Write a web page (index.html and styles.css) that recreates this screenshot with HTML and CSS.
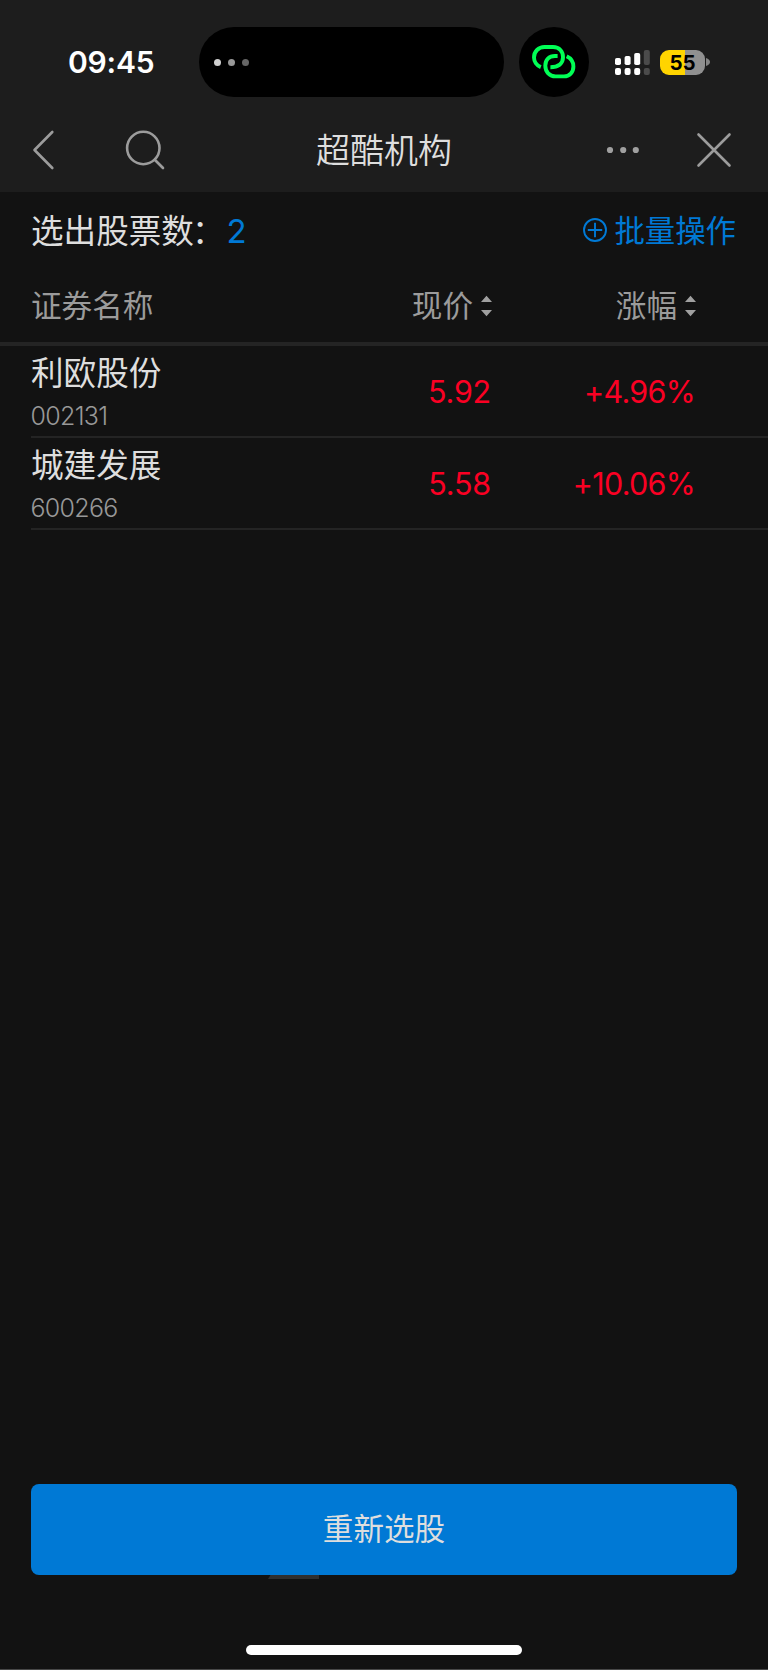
FILE: index.html
```html
<!DOCTYPE html>
<html lang="zh-CN">
<head>
<meta charset="utf-8">
<title>超酷机构</title>
<link rel="stylesheet" href="styles.css">
</head>
<body>
<main class="screen">
  <header class="top">
    <div class="status">
      <div class="clock">09:45</div>
      <div class="island"><i class="dot d1"></i><i class="dot d2"></i><i class="dot d3"></i></div>
      <div class="hotspot">
        <svg width="70" height="70" viewBox="0 0 70 70" fill="none" stroke="#00ff55" stroke-width="3.9">
          <path d="M21.8 40.1C17.5 38.4 15 34.3 15 30.5C15 24.5 19.5 20 25.5 20H34C40.5 20 44 24.7 44 30.3C44 36.6 39.4 40.3 31.4 40.3"/>
          <path d="M38.6 29H36C30 29 26.3 33 26.3 38.8C26.3 44.7 30.5 49.4 36.5 49.4H45C50.5 49.4 54.4 45.3 54.4 39.5C54.4 34.7 52 31.2 47.7 29.2"/>
        </svg>
      </div>
      <svg class="signal" width="35" height="25" viewBox="0 0 35 25">
        <g fill="#fff"><rect y="8" width="6" height="7" rx="1.8"/><rect x="9.6" y="6" width="6" height="9" rx="1.8"/><rect x="19.2" y="3" width="6" height="12" rx="1.8"/><rect y="18" width="6" height="7" rx="2"/><rect x="9.6" y="18" width="6" height="7" rx="2"/><rect x="19.2" y="18" width="6" height="7" rx="2"/></g>
        <g fill="#4b4b4b"><rect x="28.8" width="6" height="15" rx="2"/><rect x="28.8" y="18" width="6" height="7" rx="2"/></g>
      </svg>
      <div class="battery">55</div>
      <svg class="nub" width="4" height="8" viewBox="0 0 4 8"><path d="M0 0Q4 1.5 4 4Q4 6.500 0 8Z" fill="#858585"/></svg>
    </div>
    <nav class="nav">
      <div class="nav-side">
        <svg width="24" height="40" viewBox="0 0 24 40" class="line"><path d="M20.300 2L2.500 20L20.300 38"/></svg>
        <svg class="search" width="42" height="42" viewBox="0 0 42 42"><g class="line"><circle cx="18.3" cy="19" r="16.2"/><path d="M30 31L38 39"/></g></svg>
      </div>
      <h1 class="title">超酷机构</h1>
      <div class="nav-side nav-right">
        <svg width="34" height="8" viewBox="0 0 34 8" fill="#a0a0a0"><circle cx="4" cy="4" r="3.1"/><circle cx="17.2" cy="4" r="3.1"/><circle cx="29.800" cy="4" r="3.1"/></svg>
        <svg width="36" height="36" viewBox="0 0 36 36" class="line"><path d="M2.500 2.500L33.500 33.500M33.500 2.500L2.500 33.500"/></svg>
      </div>
    </nav>
  </header>

  <section class="summary">
    <div class="found">选出股票数<span class="colon">：</span><b class="count">2</b></div>
    <div class="batch">
      <svg width="24" height="24" viewBox="0 0 24 24" fill="none" stroke="#0079d5" stroke-width="1.9"><circle cx="12" cy="12" r="11"/><path d="M4.800 12H19.200M12 4.800V19.200"/></svg>
      <span class="batch-label">批量操作</span>
    </div>
  </section>

  <section class="cols head">
    <span>证券名称</span>
    <span class="sort">现价<svg width="11" height="22" viewBox="0 0 11 22" fill="#a0a0a0"><path d="M0 7L5.500 .7L11 7ZM0 15L5.500 21.300L11 15Z"/></svg></span>
    <span class="sort">涨幅<svg width="11" height="22" viewBox="0 0 11 22" fill="#a0a0a0"><path d="M0 7L5.500 .7L11 7ZM0 15L5.500 21.300L11 15Z"/></svg></span>
  </section>

  <section class="list">
    <article class="cols row">
      <div><div class="name">利欧股份</div><div class="code">002131</div></div>
      <div class="num">5.92</div>
      <div class="num pct">+4.96%</div>
    </article>
    <article class="cols row">
      <div><div class="name">城建发展</div><div class="code">600266</div></div>
      <div class="num">5.58</div>
      <div class="num pct">+10.06%</div>
    </article>
  </section>

  <footer class="bottom">
    <button class="again">重新选股</button>
    <svg class="tab" width="51" height="4" viewBox="0 0 51 4"><path d="M2.500 0H51V4H0Z" fill="#2f2f2f"/></svg>
    <div class="home"></div>
  </footer>
</main>
</body>
</html>
```
FILE: styles.css
```css
* { box-sizing: border-box; }
body { margin: 0; background: #121212; }
svg { display: block; flex: none; }
.screen {
  display: flex;
  flex-direction: column;
  width: 768px;
  height: 1670px;
  background: #121212;
  color: #dedede;
  font-family: Inter, "Noto Sans CJK SC", sans-serif;
  border-bottom: 1px solid #484848;
}
.top { height: 192px; background: #1d1d1d; flex: none; }
.status { display: flex; align-items: center; height: 97px; padding: 27px 0 0 68px; }
.clock { width: 131px; color: #fff; font-size: 30px; font-weight: 600; line-height: 70px; letter-spacing: -.2px; }
.island { display: flex; align-items: center; gap: 7px; width: 305px; height: 70px; padding-left: 15px; border-radius: 35px; background: #000; }
.dot { width: 7px; height: 7px; border-radius: 50%; }
.d1 { background: #d0d0d0; }
.d2 { background: #989898; }
.d3 { background: #666; }
.hotspot { width: 70px; height: 70px; margin-left: 15px; border-radius: 50%; background: #000; }
.signal { margin-left: 26px; }
.battery {
  width: 45px;
  height: 25px;
  margin-left: 10px;
  border-radius: 9px;
  background: linear-gradient(90deg, #ffd400 25px, #909090 25px);
  color: #000;
  font-size: 20.5px;
  font-weight: 650;
  line-height: 25px;
  text-align: center;
}
.nub { margin-left: 1px; }
.nav { display: grid; grid-template-columns: 1fr auto 1fr; align-items: center; height: 106px; padding: 0 36px 0 32px; }
.line { fill: none; stroke: #9c9c9c; stroke-width: 2.6; stroke-linecap: round; stroke-linejoin: round; }
.nav-side { display: flex; align-items: center; }
.nav-right { justify-content: flex-end; gap: 56px; }
.search { margin-left: 69px; }
.title { margin: 0; padding: 2px 0 0 4px; font-size: 34px; font-weight: 350; line-height: 50px; }
.summary { display: flex; justify-content: space-between; height: 78px; padding: 0 32px 0 31px; }
.found { font-size: 32.6px; line-height: 78px; }
.colon { margin: 0 2px 0 -2px; }
.count { color: #0079d5; font-size: 33px; font-weight: 380; }
.batch { display: flex; align-items: center; gap: 7px; height: 76px; color: #0079d5; font-size: 30.4px; }
.batch-label { padding-bottom: 3px; }
.cols { display: grid; grid-template-columns: 1fr 204px 204px; align-items: center; }
.head { height: 76px; padding: 0 72px 1px 31px; border-bottom: 4px solid #242424; color: #9b9b9b; font-size: 30.6px; line-height: 71px; }
.sort { display: flex; align-items: center; justify-content: flex-end; gap: 8px; }
.row { height: 92px; margin-left: 31px; padding-right: 74px; border-bottom: 2px solid #242424; }
.name { padding-top: 2px; font-size: 32.6px; line-height: 46px; }
.code { margin-left: -.5px; color: #989898; font-size: 25px; font-weight: 340; line-height: 40px; letter-spacing: -.7px; }
.num { margin-right: -1px; color: #fa0023; font-size: 30.500px; font-weight: 370; text-align: right; line-height: 92px; letter-spacing: -.2px; }
.pct { letter-spacing: -.7px; }
.bottom { display: flex; flex-direction: column; height: 185px; margin-top: auto; padding: 0 31px; }
.again { width: 706px; height: 91px; flex: none; padding: 0 0 5px; border: 0; border-radius: 8px; background: #0079d5; color: #dedede; font: 400 30.6px Inter, "Noto Sans CJK SC", sans-serif; }
.tab { margin-left: 237px; }
.home { width: 276px; height: 10px; margin: 66px 0 0 215px; border-radius: 5px; background: #fff; }
```
